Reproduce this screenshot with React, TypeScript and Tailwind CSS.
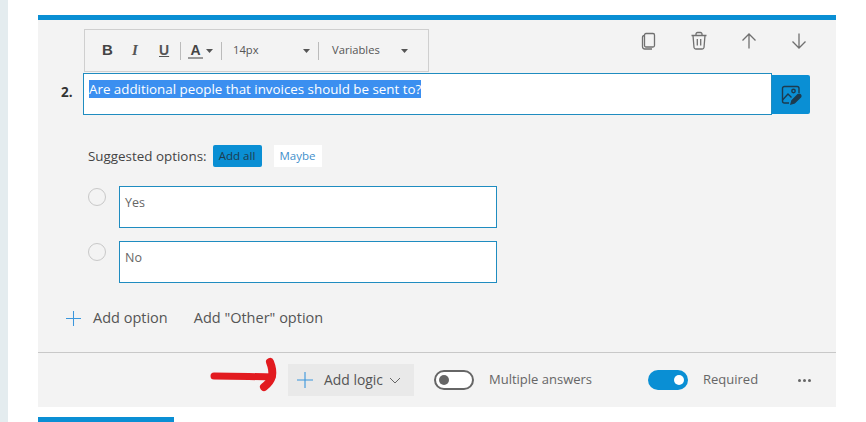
import React from "react";

const font = { fontFamily: '"Open Sans", "Noto Sans", sans-serif' };

function Caret({ className = "" }: { className?: string }) {
  return (
    <svg width="7" height="4" viewBox="0 0 7 4" className={className}>
      <path d="M0 0h7L3.5 4z" fill="#555" />
    </svg>
  );
}

function Toolbar() {
  return (
    <div className="ml-[46px] h-[43px] w-[345px] border border-[#cfcfcf] bg-[#f3f3f3] flex items-center text-[#555]">
      <span className="ml-[17px] w-[30px] text-[15px] font-bold text-[#444] font-['Liberation_Sans',sans-serif]">B</span>
      <span className="w-[27px] text-[15px] font-bold italic text-[#555] font-['Liberation_Serif',serif]">I</span>
      <span className="w-[21px] text-[14px] font-bold underline text-[#555] font-['Liberation_Sans',sans-serif]">U</span>
      <span className="h-[18px] w-px bg-[#bbb]" />
      <span className="ml-[7px] flex flex-col items-center w-[15px] leading-[14px]">
        <span className="text-[14px] font-bold text-[#444] font-['Liberation_Sans',sans-serif]">A</span>
        <span className="h-[2px] w-[15px] bg-[#999]" />
      </span>
      <Caret className="ml-[3px]" />
      <span className="ml-[8px] h-[18px] w-px bg-[#bbb]" />
      <span className="ml-[11px] w-[70px] text-[11.2px] text-[#555]">14px</span>
      <Caret />
      <span className="ml-[8px] h-[18px] w-px bg-[#bbb]" />
      <span className="ml-[13px] w-[69px] text-[11.2px] text-[#555]">Variables</span>
      <Caret />
    </div>
  );
}

function Actions() {
  return (
    <div className="absolute right-[26px] top-[10px] flex items-center gap-[28px] text-[#6b6b6b]">
      <svg width="22" height="22" viewBox="0 0 22 22" fill="none" stroke="#707070" strokeWidth="1.3">
        <rect x="6.5" y="3.5" width="10" height="13.5" rx="1.5" />
        <path d="M6.5 5.5 C4.8 5.5 4.5 6.5 4.5 7.5 V16.5 C4.5 18 5.5 19 7 19 H14" />
      </svg>
      <svg width="22" height="22" viewBox="0 0 22 22" fill="none" stroke="#707070" strokeWidth="1.3">
        <path d="M3.5 5.5h15M8 5.5V4a1.5 1.5 0 0 1 1.5-1.5h3A1.5 1.5 0 0 1 14 4v1.5M5 5.5l1 12a1.8 1.8 0 0 0 1.8 1.5h6.4A1.8 1.8 0 0 0 16 17.500l1-12M9.300 9v6.500M12.700 9v6.500" />
      </svg>
      <svg width="22" height="22" viewBox="0 0 22 22" fill="none" stroke="#707070" strokeWidth="1.3">
        <path d="M11 18.500V4M4.500 10.500 11 4l6.500 6.500" />
      </svg>
      <svg width="22" height="22" viewBox="0 0 22 22" fill="none" stroke="#707070" strokeWidth="1.3">
        <path d="M11 3.500V18M4.500 11.500 11 18l6.500-6.500" />
      </svg>
    </div>
  );
}

function ImageEdit() {
  return (
    <div className="w-[38px] h-[39px] bg-[#0a8fd4] rounded-r-[2px] flex items-center justify-center">
      <svg width="22" height="22" viewBox="0 0 22 22" fill="none" stroke="#1d3b4f" strokeWidth="1.4">
        <path d="M9 19H4.500A2 2 0 0 1 2.500 17V4.500A2 2 0 0 1 4.500 2.500H17A2 2 0 0 1 19 4.500V9" />
        <path d="M2.500 16 8 10l3.500 3.500" />
        <circle cx="13.500" cy="7" r="1.700" />
        <path d="M11 20l1-3.500 6-6a1.800 1.800 0 0 1 2.500 2.500l-6 6z" fill="#1d3b4f" />
      </svg>
    </div>
  );
}

function Option({ label }: { label: string }) {
  return (
    <div className="flex items-start ml-[50px]">
      <span className="mt-[2px] h-[18px] w-[18px] rounded-full border border-[#c8c8c8] bg-[#f3f3f3]" />
      <div className="ml-[13px] h-[42px] w-[378px] border border-[#1f8cc0] bg-white px-[5px] pt-[6px] text-[12.500px] leading-[20px] text-[#666]">
        {label}
      </div>
    </div>
  );
}

function Plus({ size, className = "" }: { size: number; className?: string }) {
  return (
    <svg width={size} height={size} viewBox="0 0 16 16" className={className} fill="none" stroke="#3a96dc" strokeWidth="1.100">
      <path d="M8 0v16M0 8h16" />
    </svg>
  );
}

function Toggle({ on }: { on: boolean }) {
  return on ? (
    <span className="h-5 w-10 rounded-full bg-[#0a8fd4] flex items-center justify-end pr-[4px]">
      <span className="h-[10px] w-[10px] rounded-full bg-white" />
    </span>
  ) : (
    <span className="h-5 w-10 rounded-full border-2 border-[#666] bg-white flex items-center pl-[3px]">
      <span className="h-[10px] w-[10px] rounded-full bg-[#666]" />
    </span>
  );
}

export default function App() {
  return (
    <div className="relative h-[422px] w-[866px] overflow-hidden bg-white flex" style={font}>
      <div className="h-full w-2 bg-[#e4ecef]" />
      <div className="ml-[30px] w-[798px] pt-[15px] flex flex-col">
        <div className="relative h-[392px] border-t-[5px] border-[#0a8fd4] bg-[#f3f3f3] flex flex-col">
          <Actions />
          <div className="pt-[9px]">
            <Toolbar />
          </div>
          <div className="flex items-start mt-[1px]">
            <span className="ml-[23px] mt-[9px] w-[22px] text-[13.500px] font-bold leading-[20px] text-[#333]">2.</span>
            <div className="h-[42px] w-[689px] border border-[#1f8cc0] bg-white pl-[5px] pt-[5px] text-[13.350px] leading-[20px] text-white whitespace-nowrap">
              <span className="bg-[#3b8ff0]">Are additional people that invoices should be sent to?</span>
            </div>
            <div className="pt-[2px]">
              <ImageEdit />
            </div>
          </div>
          <div className="flex items-center ml-[50px] mt-[30px] h-[22px]">
            <span className="text-[13.400px] text-[#444]">Suggested options:</span>
            <span className="ml-[6px] h-[22px] w-[49px] rounded-[2px] bg-[#0a8fd4] text-center text-[11.500px] leading-[22px] text-[#1d3b4f]">Add all</span>
            <span className="ml-3 h-[22px] w-[48px] bg-white text-center text-[11.500px] leading-[22px] text-[#3f8fcb]">Maybe</span>
          </div>
          <div className="mt-[19px] flex flex-col gap-[13px]">
            <Option label="Yes" />
            <Option label="No" />
          </div>
          <div className="mt-[24px] flex items-center ml-[28px] h-[22px] text-[14.500px] text-[#555]">
            <Plus size={15} />
            <span className="ml-[12px]">Add option</span>
            <span className="ml-[26px]">Add "Other" option</span>
          </div>
          <div className="mt-[23px] border-t border-[#c8c8c8] flex items-center flex-1">
            <div className="ml-[250px] h-[32px] w-[126px] bg-[#e9e9e9] flex items-center text-[13.900px] text-[#555]">
              <Plus size={16} className="ml-[9px]" />
              <span className="ml-[11px]">Add logic</span>
              <svg width="12" height="7" viewBox="0 0 12 7" className="ml-[6px]" fill="none" stroke="#666" strokeWidth="1">
                <path d="M1 1l5 5 5-5" />
              </svg>
            </div>
            <div className="ml-5"><Toggle on={false} /></div>
            <span className="ml-[15px] w-[159px] text-[13px] text-[#666]">Multiple answers</span>
            <Toggle on />
            <span className="ml-[15px] w-[95px] text-[13px] text-[#666]">Required</span>
            <span className="flex gap-[2px]">
              <span className="h-[3px] w-[3px] rounded-full bg-[#666]" />
              <span className="h-[3px] w-[3px] rounded-full bg-[#666]" />
              <span className="h-[3px] w-[3px] rounded-full bg-[#666]" />
            </span>
          </div>
        </div>
        <div className="mt-[10px] h-[5px] w-[136px] bg-[#0a8fd4]" />
      </div>
      <svg className="absolute left-[205px] top-[355px]" width="76" height="40" viewBox="0 0 76 40" fill="none" stroke="#e21a1f" strokeLinecap="round" strokeLinejoin="round">
        <path d="M9 21C25 21 45 21.500 67 22" strokeWidth="7" />
        <path d="M65 7C67 12 68 16 67 21C66 25 63 29 59 32" strokeWidth="8" />
      </svg>
    </div>
  );
}
